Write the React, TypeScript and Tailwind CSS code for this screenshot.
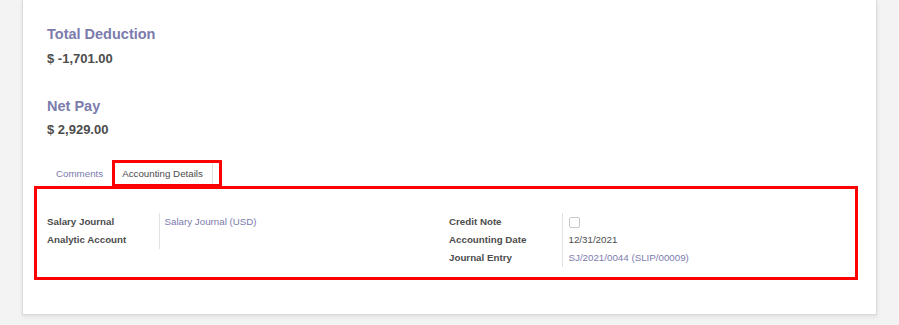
const rowsLeft = [
  { label: "Salary Journal", value: "Salary Journal (USD)", link: true },
  { label: "Analytic Account", value: "", link: false },
];

const rowsRight = [
  { label: "Credit Note", value: "checkbox", link: false },
  { label: "Accounting Date", value: "12/31/2021", link: false },
  { label: "Journal Entry", value: "SJ/2021/0044 (SLIP/00009)", link: true },
];

type Row = { label: string; value: string; link: boolean };

const FieldGroup = ({ rows, wide }: { rows: Row[]; wide?: boolean }) => {
  return (
    <table className="border-collapse">
      <tbody>
        {rows.map((r) => (
          <tr key={r.label} className="h-[18px]">
            <td
              className={`${wide ? "w-[113px]" : "w-[112px]"} border-r border-[#e2e2e2] p-0 align-middle font-bold text-[#4c4c4c]`}
            >
              {r.label}
            </td>
            <td className={`${wide ? "pl-[6px]" : "pl-[5px]"} p-0 align-middle`}>
              {r.value === "checkbox" ? (
                <span className="block h-[11px] w-[11px] rounded-[2px] border border-[#c9c9c9] bg-white" />
              ) : (
                <span className={r.link ? "text-[#7c7bad]" : "text-[#4c4c4c]"}>{r.value}</span>
              )}
            </td>
          </tr>
        ))}
      </tbody>
    </table>
  );
};

const App = () => {
  return (
    <div
      className="h-[325px] w-full overflow-hidden bg-[#f3f3f3] pl-[22px]"
      style={{ fontFamily: '"Liberation Sans", Arial, sans-serif' }}
    >
      <div className="w-[855px] border-x border-b border-[#d9d9e0] bg-white pb-[34px] shadow-[0_2px_4px_rgba(0,0,0,0.08)]">
        <div className="pl-[24px] pt-[24px]">
          <h2 className="text-[14.5px] font-bold leading-[20px] text-[#7c7bad]">Total Deduction</h2>
          <p className="mt-[6px] text-[13px] font-bold leading-[18px] text-[#4c4c4c]">$ -1,701.00</p>
          <h2 className="mt-[28px] text-[14.5px] font-bold leading-[20px] text-[#7c7bad]">Net Pay</h2>
          <p className="mt-[5px] text-[13px] font-bold leading-[18px] text-[#4c4c4c]">$ 2,929.00</p>
        </div>

        <div className="mt-[23px] flex pl-[24px] text-[9.75px]">
          <div className="flex h-[24px] items-center px-[9px] text-[#7c7bad]">Comments</div>
          <div className="relative flex h-[24px] items-center border-x border-t border-[#dee2e6] px-[9px] text-[#4c4c4c]">
            Accounting Details
            <span className="pointer-events-none absolute left-[-1px] top-[-3px] h-[27px] w-[110px] border-[3px] border-[#ff0000]" />
          </div>
        </div>

        <div className="ml-[11px] mr-[18px] grid grid-cols-[402px_1fr] items-start border-[3px] border-[#ff0000] pb-[10px] pl-[10px] pt-[24px] text-[9.75px]">
          <FieldGroup rows={rowsLeft} />
          <FieldGroup rows={rowsRight} wide />
        </div>
      </div>
    </div>
  );
};

export default App;
